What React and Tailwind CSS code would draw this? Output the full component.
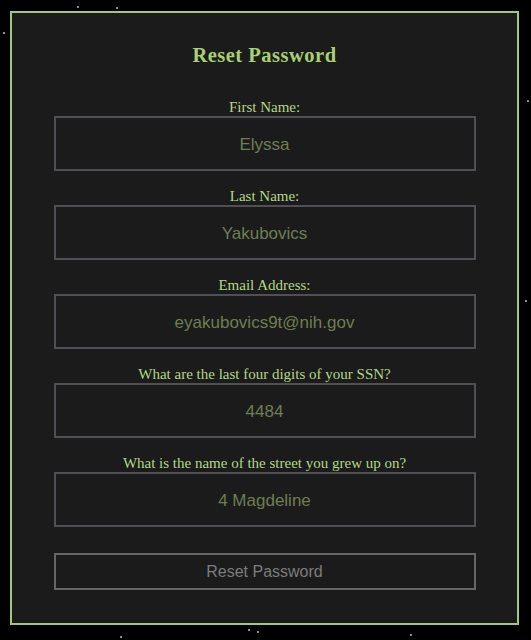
import { useState } from 'react'

const fields = [
  { label: 'First Name:', value: 'Elyssa' },
  { label: 'Last Name:', value: 'Yakubovics' },
  { label: 'Email Address:', value: 'eyakubovics9t@nih.gov' },
  { label: 'What are the last four digits of your SSN?', value: '4484' },
  { label: 'What is the name of the street you grew up on?', value: '4 Magdeline' },
]

// a few background stars
const stars = [
  [77, 6], [116, 7], [3, 32], [527, 100], [525, 300], [248, 629], [257, 631], [410, 634], [120, 636],
]

export default function App() {
  const [values, setValues] = useState(fields.map(f => f.value))

  return (
    <div className="relative w-[531px] h-[640px] bg-black overflow-hidden">
      {stars.map(([x, y], i) => (
        <span
          key={i}
          className="absolute w-[2px] h-[2px] rounded-full bg-[#bbbbbb]"
          style={{ left: x, top: y }}
        />
      ))}

      <div className="relative ml-[10px] pt-[11px]">
        <form
          onSubmit={e => e.preventDefault()}
          className="w-[509px] h-[614px] border-2 border-[#a6c67c] bg-[#1b1b1c] flex flex-col items-center pt-[31px]"
          style={{ fontFamily: '"Liberation Serif", "Times New Roman", serif' }}
        >
          <h1 className="text-[20.5px] leading-[23px] font-bold text-[#a9d072] tracking-[0.5px]">Reset Password</h1>

          <div className="mt-[32px] flex flex-col w-[422px]">
            {fields.map((f, i) => (
              <div key={f.label} className="flex flex-col items-center mb-[17px]">
                <label className="text-[15px] leading-[17px] text-[#b3d785]">{f.label}</label>
                <input
                  value={values[i]}
                  onChange={e => setValues(v => v.map((x, j) => (j === i ? e.target.value : x)))}
                  className="w-[422px] h-[55px] pt-[3px] border-2 border-[#4f4f56] bg-[#1b1b1c] text-center text-[17px] text-[#6f7e52] outline-none"
                  style={{ fontFamily: '"Liberation Sans", Arial, sans-serif' }}
                />
              </div>
            ))}
          </div>

          <button
            type="submit"
            className="mt-[9px] w-[422px] h-[37px] pt-[1px] border-2 border-[#666666] bg-transparent text-[16px] text-[#7c7c7c]"
            style={{ fontFamily: '"Liberation Sans", Arial, sans-serif' }}
          >
            Reset Password
          </button>
        </form>
      </div>
    </div>
  )
}
